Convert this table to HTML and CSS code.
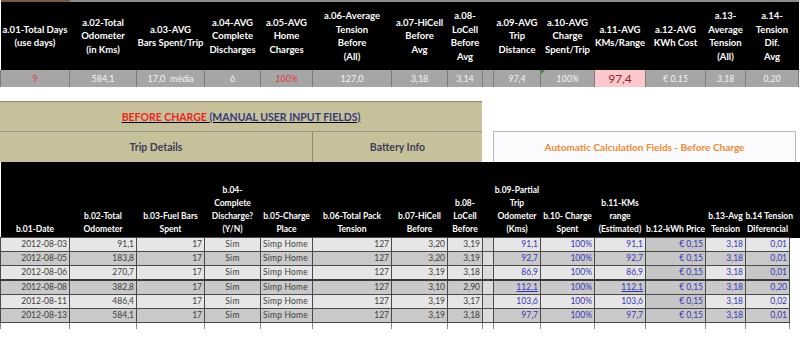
FILE: index.html
```html
<!DOCTYPE html>
<html>
<head>
<meta charset="utf-8">
<link rel="stylesheet" href="styles.css">
</head>
<body>
<table class="sheet top">
  <colgroup>
    <col style="width:69px"><col style="width:67px"><col style="width:68px"><col style="width:56px"><col style="width:52px"><col style="width:79px"><col style="width:56px"><col style="width:35px"><col style="width:11px"><col style="width:47px"><col style="width:54px"><col style="width:51px"><col style="width:60px"><col style="width:40px"><col style="width:53px">
  </colgroup>
  <tr class="hdr1">
    <th class="brown">a.01-Total Days<br>(use days)</th>
    <th>a.02-Total<br>Odometer<br>(in Kms)</th>
    <th>a.03-AVG<br>Bars Spent/Trip</th>
    <th>a.04-AVG<br>Complete<br>Discharges</th>
    <th>a.05-AVG<br>Home<br>Charges</th>
    <th>a.06-Average<br>Tension<br>Before<br>(All)</th>
    <th>a.07-HiCell<br>Before<br>Avg</th>
    <th>a.08-<br>LoCell<br>Before<br>Avg</th>
    <th></th>
    <th>a.09-AVG<br>Trip<br>Distance</th>
    <th>a.10-AVG<br>Charge<br>Spent/Trip</th>
    <th>a.11-AVG<br>KMs/Range</th>
    <th>a.12-AVG<br>KWh Cost</th>
    <th>a.13-<br>Average<br>Tension<br>(All)</th>
    <th>a.14-<br>Tension<br>Dif.<br>Avg</th>
  </tr>
  <tr class="sum">
    <td class="red">9</td>
    <td>584,1</td>
    <td>17,0 &nbsp;média</td>
    <td>6</td>
    <td class="red it">100%</td>
    <td>127,0</td>
    <td>3,18</td>
    <td>3,14</td>
    <td></td>
    <td class="it">97,4</td>
    <td class="it flag">100%</td>
    <td class="pink">97,4</td>
    <td class="it">€ 0,15</td>
    <td class="it">3,18</td>
    <td class="it">0,20</td>
  </tr>
</table>

<div class="mid">
  <div class="banner"><span class="bc">BEFORE CHARGE </span><span class="mu">(MANUAL USER INPUT FIELDS)</span></div>
  <div class="groups">
    <div class="grp trip">Trip Details</div>
    <div class="grp batt">Battery Info</div>
  </div>
  <div class="auto">Automatic Calculation Fields - Before Charge</div>
</div>

<table class="sheet data">
  <colgroup>
    <col style="width:69px"><col style="width:67px"><col style="width:68px"><col style="width:56px"><col style="width:52px"><col style="width:79px"><col style="width:56px"><col style="width:35px"><col style="width:11px"><col style="width:47px"><col style="width:54px"><col style="width:51px"><col style="width:60px"><col style="width:40px"><col style="width:44px"><col style="width:11px">
  </colgroup>
  <tr class="hdr2">
    <th>b.01-Date</th>
    <th>b.02-Total<br>Odometer</th>
    <th>b.03-Fuel Bars<br>Spent</th>
    <th>b.04-<br>Complete<br>Discharge?<br>(Y/N)</th>
    <th>b.05-Charge<br>Place</th>
    <th>b.06-Total Pack<br>Tension</th>
    <th>b.07-HiCell<br>Before</th>
    <th>b.08-<br>LoCell<br>Before</th>
    <th></th>
    <th>b.09-Partial<br>Trip<br>Odometer<br>(Kms)</th>
    <th>b.10- Charge<br>Spent</th>
    <th>b.11-KMs<br>range<br>(Estimated)</th>
    <th>b.12-kWh Price</th>
    <th>b.13-Avg<br>Tension</th>
    <th>b.14 Tension<br>Diferencial</th>
    <th></th>
  </tr>
  <tr class="row odd"><td class="r">2012-08-03</td><td class="r">91,1</td><td class="r">17</td><td class="c">Sim</td><td class="l">Simp Home</td><td class="r">127</td><td class="r">3,20</td><td class="r">3,19</td><td class="gap"></td><td class="r b">91,1</td><td class="r b">100%</td><td class="r b">91,1</td><td class="r b dk">€ 0,15</td><td class="r b">3,18</td><td class="r b">0,01</td><td class="out"></td></tr>
  <tr class="row even"><td class="r">2012-08-05</td><td class="r">183,8</td><td class="r">17</td><td class="c">Sim</td><td class="l">Simp Home</td><td class="r">127</td><td class="r">3,20</td><td class="r">3,19</td><td class="gap"></td><td class="r b">92,7</td><td class="r b">100%</td><td class="r b">92,7</td><td class="r b dk">€ 0,15</td><td class="r b">3,18</td><td class="r b">0,01</td><td class="out"></td></tr>
  <tr class="row odd"><td class="r">2012-08-06</td><td class="r">270,7</td><td class="r">17</td><td class="c">Sim</td><td class="l">Simp Home</td><td class="r">127</td><td class="r">3,19</td><td class="r">3,18</td><td class="gap"></td><td class="r b">86,9</td><td class="r b">100%</td><td class="r b">86,9</td><td class="r b dk">€ 0,15</td><td class="r b">3,18</td><td class="r b dk">0,01</td><td class="out"></td></tr>
  <tr class="row even thick"><td class="r">2012-08-08</td><td class="r">382,8</td><td class="r">17</td><td class="c">Sim</td><td class="l">Simp Home</td><td class="r">127</td><td class="r">3,10</td><td class="r">2,90</td><td class="gap"></td><td class="r b u">112,1</td><td class="r b">100%</td><td class="r b u">112,1</td><td class="r b dk">€ 0,15</td><td class="r b">3,18</td><td class="r b">0,20</td><td class="out"></td></tr>
  <tr class="row odd"><td class="r">2012-08-11</td><td class="r">486,4</td><td class="r">17</td><td class="c">Sim</td><td class="l">Simp Home</td><td class="r">127</td><td class="r">3,19</td><td class="r">3,17</td><td class="gap"></td><td class="r b">103,6</td><td class="r b">100%</td><td class="r b">103,6</td><td class="r b dk">€ 0,15</td><td class="r b">3,18</td><td class="r b">0,02</td><td class="out"></td></tr>
  <tr class="row even"><td class="r">2012-08-13</td><td class="r">584,1</td><td class="r">17</td><td class="c">Sim</td><td class="l">Simp Home</td><td class="r">127</td><td class="r">3,19</td><td class="r">3,18</td><td class="gap"></td><td class="r b">97,7</td><td class="r b">100%</td><td class="r b">97,7</td><td class="r b dk">€ 0,15</td><td class="r b">3,18</td><td class="r b">0,01</td><td class="out"></td></tr>
  <tr class="stub"><td></td><td></td><td></td><td></td><td></td><td></td><td></td><td></td><td></td><td></td><td></td><td></td><td></td><td></td><td></td><td class="out"></td></tr>
</table>
</body>
</html>
```

FILE: styles.css
```css
body {
  margin: 0;
  background: #ffffff;
  font-family: Lato, "Liberation Sans", sans-serif;
}

.sheet {
  border-collapse: collapse;
  table-layout: fixed;
}

.top {
  width: 798px;
}

.hdr1 th {
  background: #000000;
  color: #ffffff;
  font-weight: 700;
  font-size: 9.5px;
  line-height: 13.5px;
  height: 68px;
  padding: 0;
  text-align: center;
  vertical-align: middle;
  border-top: 2px solid #8a8a8a;
  white-space: nowrap;
  overflow: visible;
}

.hdr1 th.brown {
  border-top-color: #7a5a40;
}

.sum td {
  background: #a6a6a6;
  color: #f4f4f4;
  font-size: 9px;
  height: 17px;
  padding: 0;
  text-align: center;
  vertical-align: middle;
  border-left: 1px solid #7c7c7c;
  border-right: 1px solid #7c7c7c;
  white-space: nowrap;
  position: relative;
}

.sum td.red {
  color: #e03a3a;
}

.sum td.it {
  font-style: italic;
}

.sum td.pink {
  background: #fbc8cc;
  color: #a0202a;
  font-size: 12px;
}

.sum td.flag::before {
  content: "";
  position: absolute;
  left: 0;
  top: 0;
  border-top: 4px solid #2e8a2e;
  border-right: 4px solid transparent;
}

.mid {
  display: grid;
  grid-template-columns: 482px 11px 303px;
  grid-template-rows: 30px 31px;
  margin-top: 14px;
}

.banner {
  grid-column: 1;
  grid-row: 1;
  background: #c7c19b;
  border-top: 1px solid #8a8670;
  display: flex;
  align-items: center;
  justify-content: center;
  font-size: 10.5px;
  font-weight: 700;
  text-decoration: underline;
}

.bc {
  color: #e8261e;
  white-space: pre;
}

.mu {
  color: #343a78;
}

.groups {
  grid-column: 1;
  grid-row: 2;
  display: flex;
  background: #c7c19b;
  border-top: 1px solid #9a9680;
}

.grp {
  display: flex;
  align-items: center;
  justify-content: center;
  font-size: 10.5px;
  font-weight: 700;
  color: #3d3d55;
}

.trip {
  width: 312px;
  border-right: 1px solid #8f8b72;
}

.batt {
  flex: 1;
}

.auto {
  grid-column: 3;
  grid-row: 2;
  background: #fbfbfd;
  border: 1px solid #b8b8b8;
  border-bottom: none;
  display: flex;
  align-items: center;
  justify-content: center;
  font-size: 10px;
  font-weight: 700;
  color: #ec8a34;
}

.data {
  width: 800px;
}

.hdr2 th {
  background: #000000;
  color: #ffffff;
  font-weight: 700;
  font-size: 8.5px;
  line-height: 13px;
  height: 74px;
  padding: 0 0 1px 0;
  text-align: center;
  vertical-align: bottom;
  white-space: nowrap;
}

.row td {
  height: 13px;
  padding: 0 2px;
  font-size: 8.5px;
  line-height: 13px;
  color: #3e3e3e;
  border: 1px solid #4a4a4a;
  white-space: nowrap;
}

.row.odd td {
  background: #e6e6e6;
}

.row.even td {
  background: #c9c9c9;
}

.row td.gap {
  background: #dcdcdc;
}

.row.thick td {
  border-top: 2px solid #3a3a3a;
}

.row td.r {
  text-align: right;
}

.row td.c {
  text-align: center;
  letter-spacing: 0.3px;
}

.row td.l {
  text-align: left;
  letter-spacing: 0.2px;
}

.row td.b {
  color: #3a36b8;
}

.row td.u {
  text-decoration: underline;
}

.row td.dk {
  background: #c6c6c6;
}

.row td.out,
.stub td.out {
  background: #ffffff;
  border: none;
  border-left: 1px solid #4a4a4a;
}

.stub td {
  height: 6px;
  padding: 0;
  border-left: 1px solid #8a8a8a;
  border-right: 1px solid #8a8a8a;
  background: #ffffff;
}
```
